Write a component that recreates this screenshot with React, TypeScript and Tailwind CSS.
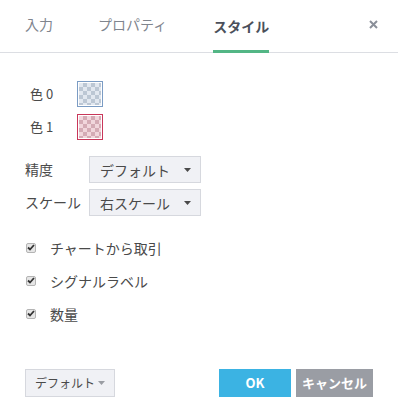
import React from 'react'

const font = { fontFamily: '"Noto Sans CJK JP", "Liberation Sans", sans-serif' }

function Swatch({ tone }: { tone: 'blue' | 'red' }) {
  const border = tone === 'blue' ? 'border-[#7b9cc4]' : 'border-[#c9375a]'
  const light = tone === 'blue' ? '#e2e8f0' : '#f1d6dc'
  const dark = tone === 'blue' ? '#bcc7d4' : '#d4abb5'
  return (
    <div className={`w-[26px] h-[26px] border ${border} p-px bg-white`}>
      <div
        className="w-full h-full"
        style={{
          backgroundColor: light,
          backgroundImage: `linear-gradient(45deg, ${dark} 25%, transparent 25%, transparent 75%, ${dark} 75%), linear-gradient(45deg, ${dark} 25%, transparent 25%, transparent 75%, ${dark} 75%)`,
          backgroundSize: '8px 8px',
          backgroundPosition: '0 0, 4px 4px',
        }}
      />
    </div>
  )
}

function Caret({ color = '#4a4a4a' }: { color?: string }) {
  return (
    <svg width="7" height="4" viewBox="0 0 7 4">
      <path d="M0 0h7L3.5 4z" fill={color} />
    </svg>
  )
}

function Select({ value }: { value: string }) {
  return (
    <div className="w-[112px] h-[27px] flex items-center justify-between pl-[10px] pr-[9px] bg-[#f0f1f5] border border-[#d6d8de] text-[14px] text-[#4a4a4a] whitespace-nowrap">
      <span className="leading-none">{value}</span>
      <Caret />
    </div>
  )
}

function Check({ label }: { label: string }) {
  return (
    <div className="flex items-center h-[33px]">
      <span className="w-[10px] h-[10px] ml-[26px] rounded-[2px] border border-[#b4b4b4] bg-[#e6e6e6] flex items-center justify-center">
        <svg width="8" height="7" viewBox="0 0 8 7">
          <path d="M1 3.5L3 5.5L7 1" stroke="#333" strokeWidth="1.8" fill="none" />
        </svg>
      </span>
      <span className="ml-[14px] text-[14px] text-[#4a4a4a] leading-none">{label}</span>
    </div>
  )
}

export default function App() {
  return (
    <div className="w-[398px] h-[420px] bg-white flex flex-col" style={font}>
      {/* Tabs */}
      <div className="h-[53px] flex items-stretch border-b border-[#dcdee3]">
        <div className="ml-[25px] flex items-center text-[14px] text-[#80858e] pb-[4px]">入力</div>
        <div className="ml-[45px] flex items-center text-[14px] text-[#80858e] pb-[4px]">プロパティ</div>
        <div className="ml-[46px] flex items-center text-[14px] font-bold text-[#4b505b] border-b-[3px] border-[#53b685] -mb-px pt-[3px]">スタイル</div>
        <div className="ml-auto mr-[20px] flex items-center pb-[4px]">
          <svg width="9" height="9" viewBox="0 0 9 9">
            <path d="M1 1L8 8M8 1L1 8" stroke="#8a8f99" strokeWidth="2" />
          </svg>
        </div>
      </div>

      {/* Colors */}
      <div className="mt-[28px] flex items-center">
        <span className="ml-[30px] w-[47px] text-[13px] text-[#4a4a4a]">色 0</span>
        <Swatch tone="blue" />
      </div>
      <div className="mt-[7px] flex items-center">
        <span className="ml-[30px] w-[47px] text-[13px] text-[#4a4a4a]">色 1</span>
        <Swatch tone="red" />
      </div>

      {/* Selects */}
      <div className="mt-[16px] flex items-center">
        <span className="ml-[25px] w-[64px] text-[14px] text-[#4a4a4a]">精度</span>
        <Select value="デフォルト" />
      </div>
      <div className="mt-[6px] flex items-center">
        <span className="ml-[25px] w-[64px] text-[14px] text-[#4a4a4a]">スケール</span>
        <Select value="右スケール" />
      </div>

      {/* Checkboxes */}
      <div className="mt-[15px] flex flex-col">
        <Check label="チャートから取引" />
        <Check label="シグナルラベル" />
        <Check label="数量" />
      </div>

      {/* Footer */}
      <div className="mt-auto mb-[23px] flex items-center px-[25px]">
        <div className="w-[90px] h-[28px] flex items-center justify-between pl-[9px] pr-[9px] bg-[#f0f1f5] border border-[#d6d8de] text-[12px] text-[#4a4a4a] whitespace-nowrap">
          <span className="leading-none">デフォルト</span>
          <Caret color="#9a9da3" />
        </div>
        <div className="ml-auto w-[72px] h-[28px] flex items-center justify-center bg-[#3bb3e3] text-white text-[13px] font-bold">OK</div>
        <div className="ml-[5px] w-[77px] h-[28px] flex items-center justify-center bg-[#9a9da4] text-white text-[13px] font-bold whitespace-nowrap">キャンセル</div>
      </div>
    </div>
  )
}
